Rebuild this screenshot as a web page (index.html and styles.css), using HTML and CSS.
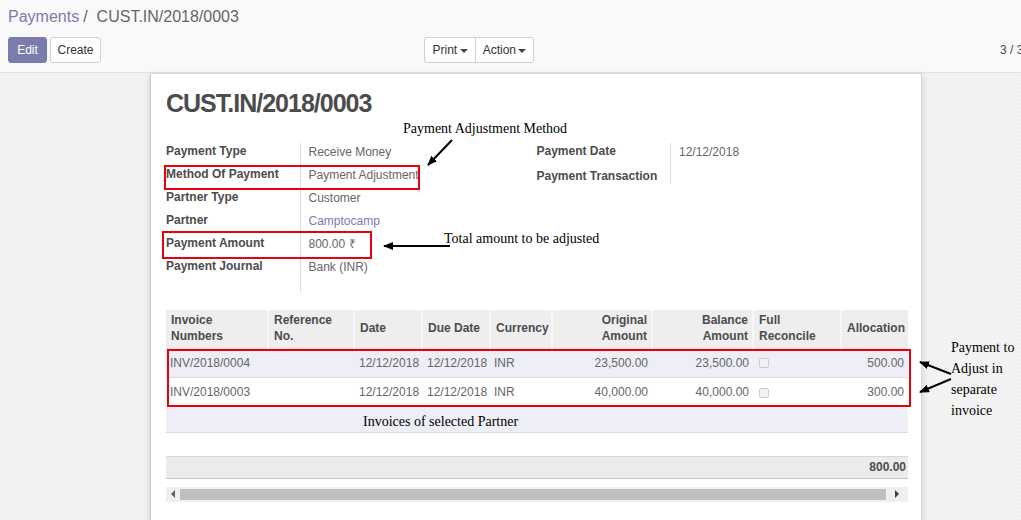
FILE: index.html
```html
<!DOCTYPE html>
<html>
<head>
<meta charset="utf-8">
<link rel="stylesheet" href="styles.css">
</head>
<body>
<div class="page">
  <div class="cp">
    <div class="bc"><span class="bc-link">Payments</span><span class="bc-sep">/</span><span class="bc-cur">CUST.IN/2018/0003</span></div>
    <div class="cp-row">
      <div class="cp-left">
        <button class="btn btn-primary btn-edit">Edit</button>
        <button class="btn btn-default btn-create">Create</button>
      </div>
      <div class="btn-group">
        <button class="btn btn-default btn-print">Print <span class="caret"></span></button>
        <button class="btn btn-default btn-action">Action <span class="caret"></span></button>
      </div>
      <div class="pager">3 / 3</div>
    </div>
  </div>
  <div class="content">
    <div class="sheet">
      <h1 class="title">CUST.IN/2018/0003</h1>
      <div class="groups">
        <table class="grp">
          <tr><td class="lbl">Payment Type</td><td class="val">Receive Money</td></tr>
          <tr><td class="lbl">Method Of Payment</td><td class="val">Payment Adjustment</td></tr>
          <tr><td class="lbl">Partner Type</td><td class="val">Customer</td></tr>
          <tr><td class="lbl">Partner</td><td class="val link">Camptocamp</td></tr>
          <tr><td class="lbl">Payment Amount</td><td class="val">800.00 ₹</td></tr>
          <tr><td class="lbl">Payment Journal</td><td class="val">Bank (INR)</td></tr>
          <tr class="tail"><td class="lbl"></td><td class="val"></td></tr>
        </table>
        <table class="grp">
          <tr><td class="lbl">Payment Date</td><td class="val">12/12/2018</td></tr>
          <tr class="tall"><td class="lbl">Payment Transaction</td><td class="val"></td></tr>
        </table>
      </div>
      <table class="lines">
        <colgroup>
          <col style="width:102px"><col style="width:86px"><col style="width:68px"><col style="width:68px"><col style="width:62px"><col style="width:100px"><col style="width:101px"><col style="width:88px"><col style="width:67px">
        </colgroup>
        <thead>
          <tr>
            <th>Invoice<br>Numbers</th><th>Reference<br>No.</th><th>Date</th><th>Due Date</th><th>Currency</th><th class="num">Original<br>Amount</th><th class="num">Balance<br>Amount</th><th>Full<br>Reconcile</th><th class="num">Allocation</th>
          </tr>
        </thead>
        <tbody>
          <tr class="odd">
            <td>INV/2018/0004</td><td></td><td class="date">12/12/2018</td><td class="date">12/12/2018</td><td>INR</td><td class="num">23,500.00</td><td class="num">23,500.00</td><td><span class="chk"></span></td><td class="num">500.00</td>
          </tr>
          <tr class="even">
            <td>INV/2018/0003</td><td></td><td class="date">12/12/2018</td><td class="date">12/12/2018</td><td>INR</td><td class="num">40,000.00</td><td class="num">40,000.00</td><td><span class="chk"></span></td><td class="num">300.00</td>
          </tr>
          <tr class="odd empty"><td colspan="9"></td></tr>
        </tbody>
      </table>
      <div class="total"><span>800.00</span></div>
      <div class="hscroll">
        <span class="arr arr-l"></span>
        <span class="thumb"></span>
        <span class="arr arr-r"></span>
      </div>
    </div>
  </div>

  <div class="note note-method">Payment Adjustment Method</div>
  <div class="note note-total">Total amount to be adjusted</div>
  <div class="note note-inv">Invoices of selected Partner</div>
  <div class="note note-sep">Payment to<br>Adjust in<br>separate<br>invoice</div>
  <div class="box box-method"></div>
  <div class="box box-amount"></div>
  <div class="box box-lines"></div>
  <svg class="arrows" width="1021" height="520" viewBox="0 0 1021 520">
    <defs>
      <marker id="ah" markerWidth="10" markerHeight="8" refX="9" refY="4" orient="auto" markerUnits="userSpaceOnUse">
        <path d="M0,0 L10,4 L0,8 Z" fill="#000"/>
      </marker>
    </defs>
    <line x1="452" y1="140" x2="428" y2="165" stroke="#000" stroke-width="2" marker-end="url(#ah)"/>
    <line x1="450" y1="246" x2="384" y2="246" stroke="#000" stroke-width="2" marker-end="url(#ah)"/>
    <line x1="951" y1="374" x2="920" y2="362" stroke="#000" stroke-width="2" marker-end="url(#ah)"/>
    <line x1="951" y1="379" x2="920" y2="392" stroke="#000" stroke-width="2" marker-end="url(#ah)"/>
  </svg>
</div>
</body>
</html>
```

FILE: styles.css
```css
* { box-sizing: border-box; }
html, body { margin: 0; padding: 0; }
body {
  font-family: "Liberation Sans", Arial, sans-serif;
  font-size: 12px;
  color: #4c4c4c;
  overflow: hidden;
  width: 1021px;
  height: 520px;
}
.page { position: relative; width: 1021px; height: 520px; overflow: hidden; }

.cp {
  background: #f9f9f9;
  border-bottom: 1px solid #e2e2e2;
  height: 73px;
  padding: 6px 0 0 8px;
}
.bc { font-size: 16px; line-height: 22px; height: 22px; }
.bc-link { color: #7c7bad; }
.bc-sep { color: #666; margin: 0 9px 0 4px; }
.bc-cur { color: #666; }
.cp-row { display: flex; align-items: center; margin-top: 9px; height: 26px; }
.cp-left { display: flex; gap: 3px; width: 416px; }
.btn {
  font-family: "Liberation Sans", Arial, sans-serif;
  font-size: 12px;
  height: 26px;
  padding: 0;
  border-radius: 3px;
  cursor: pointer;
}
.btn-primary { background: #7c7bad; border: 1px solid #7c7bad; color: #fff; }
.btn-default { background: #fff; border: 1px solid #d0d0d0; color: #333; }
.btn-edit { width: 39px; }
.btn-create { width: 51px; }
.btn-group { display: flex; }
.btn-print { width: 52px; border-radius: 3px 0 0 3px; }
.btn-action { width: 59px; border-radius: 0 3px 3px 0; border-left: 1px solid #d0d0d0; margin-left: -1px; }
.caret {
  display: inline-block;
  width: 0; height: 0;
  border-left: 4px solid transparent;
  border-right: 4px solid transparent;
  border-top: 4px solid #444;
  vertical-align: middle;
  margin-left: -1px;
}
.pager { margin-left: auto; width: 21px; white-space: nowrap; color: #4c4c4c; font-size: 12px; }

.content {
  height: 447px;
  background-color: #f3f3f3;
  background-image: repeating-conic-gradient(#f0f0f0 0 25%, #f5f5f5 0 50%);
  background-size: 4px 4px;
  padding-left: 150px;
}
.sheet {
  width: 772px;
  height: 460px;
  background: #fff;
  border: 1px solid #d8d6e0;
  border-left-color: #c8c4d8;
  border-bottom: none;
  box-shadow: 0 3px 8px rgba(0,0,0,0.15);
  padding: 14px 14px 0 15px;
}
.title {
  margin: 0;
  font-size: 25px;
  letter-spacing: -1px;
  line-height: 30px;
  font-weight: bold;
  color: #4c4c4c;
}
.groups { display: flex; align-items: flex-start; margin-top: 25px; }
.grp { width: 371px; border-collapse: collapse; }
.grp td { padding: 0; height: 23px; vertical-align: top; line-height: 14px; }
.grp .lbl { width: 134px; font-weight: bold; color: #4c4c4c; padding-top: 1px; }
.grp .val { border-left: 1px solid #ddd; padding-left: 8px; padding-top: 2px; color: #666; }
.grp .link { color: #7c7bad; }
.grp .tail td { height: 11px; }
.grp .tall td { height: 18px; padding-top: 3px; }

.lines {
  margin-top: 18px;
  width: 742px;
  border-collapse: collapse;
  table-layout: fixed;
}
.lines th {
  background: #eeeeee;
  font-weight: bold;
  text-align: left;
  color: #4c4c4c;
  height: 38px;
  line-height: 16px;
  padding: 0 4px 2px 5px;
  border-left: 2px solid #f7f7f7;
  vertical-align: middle;
}
.lines th:first-child { border-left: none; }
.lines th.num, .lines td.num { text-align: right; }
.lines td {
  height: 29px;
  padding: 0 4px 0 4px;
  color: #666;
  white-space: nowrap;
  border-top: 1px solid #ddd;
}
.lines td.date { padding-left: 5px; padding-right: 2px; }
.lines tr.odd td { background: #eeeef6; }
.lines tr.even td { background: #fff; }
.lines tr.empty td { height: 26px; border-top: none; border-bottom: 1px solid #dcdae6; }
.chk {
  display: inline-block;
  width: 10px; height: 10px;
  border: 1px solid #ccc;
  border-radius: 2px;
  background: #f2f2f2;
  vertical-align: middle;
  margin-left: 2px;
}
.total {
  margin-top: 23px;
  width: 742px;
  height: 23px;
  background: #ebebeb;
  border-top: 1px solid #d8d8d8;
  border-bottom: 1px solid #c6c6c6;
  text-align: right;
  font-weight: bold;
  line-height: 20px;
  padding-right: 2px;
}
.hscroll {
  margin-top: 8px;
  width: 742px;
  height: 15px;
  background: #efefef;
  display: flex;
  align-items: center;
}
.thumb { flex: 1; height: 11px; background: #bfbfbf; }
.arr { width: 14px; height: 15px; display: flex; align-items: center; justify-content: center; }
.arr-l::before { content: ""; border-right: 4px solid #606060; border-top: 4px solid transparent; border-bottom: 4px solid transparent; }
.arr-r::before { content: ""; border-left: 4px solid #404040; border-top: 4px solid transparent; border-bottom: 4px solid transparent; }
.arr-r { width: 22px; }

.note {
  position: absolute;
  font-family: "Liberation Serif", "Times New Roman", serif;
  font-size: 14px;
  color: #000;
  line-height: 21px;
  white-space: nowrap;
}
.note-method { left: 403px; top: 118px; }
.note-total { left: 444px; top: 228px; }
.note-inv { left: 363px; top: 411px; }
.note-sep { left: 951px; top: 337px; }
.box { position: absolute; border: 2px solid #e8000b; }
.box-method { left: 164px; top: 165px; width: 256px; height: 25px; }
.box-amount { left: 162px; top: 231px; width: 210px; height: 28px; }
.box-lines { left: 167px; top: 349px; width: 744px; height: 58px; }
.arrows { position: absolute; left: 0; top: 0; pointer-events: none; }
```
